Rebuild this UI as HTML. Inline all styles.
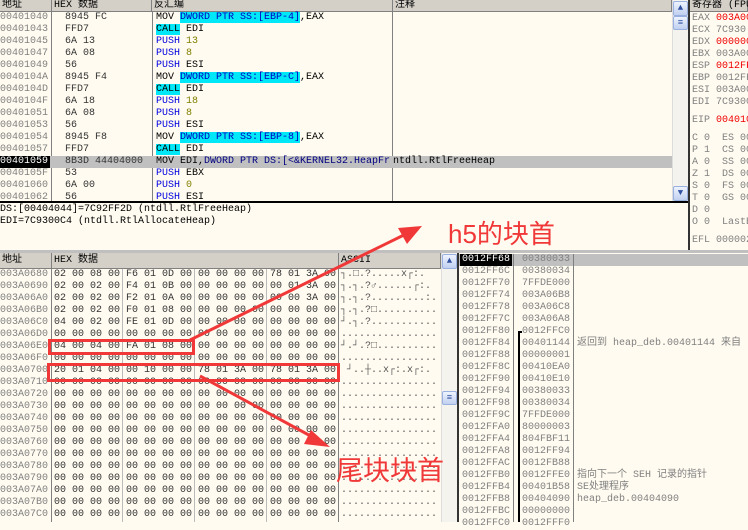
<!DOCTYPE html><html><head><meta charset="utf-8"><style>
*{margin:0;padding:0;box-sizing:border-box}
body{width:748px;height:522px;overflow:hidden;background:#FFFBF0;position:relative;font-family:"Liberation Mono","Noto Sans CJK SC",monospace;font-size:10px;color:#333}
.a{position:absolute}
.p{position:absolute;white-space:pre;line-height:12px}
.hd{position:absolute;background:#D4D0C8;height:12px;border-bottom:1px solid #808080;border-right:1px solid #808080;line-height:12px;white-space:pre;color:#000;padding-left:2px;font-family:"Liberation Mono","Noto Sans CJK SC",monospace}
.g{color:#808080}.b{color:#0000E0}.o{color:#808000}.c{background:#00E8F8;color:#0000C0}.cc{background:#00E8F8;color:#0000E0}.r{color:#F00000}.n{color:#000080}
.vl{position:absolute;width:1px;background:#808080}
.sb{position:absolute;background:#F4F3EE;border-left:1px solid #ddd}
.btn{position:absolute;width:15px;height:15px;background:linear-gradient(#EEF3FF,#C0D0F0);border:1px solid #9AB0E0;border-radius:2px;color:#3050A0;font-size:9px;text-align:center;line-height:13px}
.box{position:absolute;border:3px solid #F03838}
.ann{position:absolute;color:#F03838;font-family:"Liberation Sans","Noto Sans CJK SC",sans-serif;white-space:nowrap}
</style></head><body>
<div class="hd" style="left:0;top:0;width:52px">地址</div>
<div class="hd" style="left:52px;top:0;width:100px">HEX 数据</div>
<div class="hd" style="left:152px;top:0;width:241px">反汇编</div>
<div class="hd" style="left:393px;top:0;width:279px">注释</div>
<div class="vl" style="left:51px;top:12px;height:190px"></div>
<div class="vl" style="left:152px;top:12px;height:190px"></div>
<div class="vl" style="left:392px;top:12px;height:190px"></div>
<div class="a" style="left:0;top:156px;width:672px;height:12px;background:#C0C0C0"></div>
<div class="a" style="left:0;top:156px;width:50px;height:12px;background:#000"></div>
<div class="p g" style="left:0;top:12px">00401040
00401043
00401045
00401047
00401049
0040104A
0040104D
0040104F
00401051
00401053
00401054
00401057
<span style="color:#fff">00401059</span>
0040105F
00401060
00401062</div>
<div class="p" style="left:65px;top:12px">8945 FC
FFD7
6A 13
6A 08
56
8945 F4
FFD7
6A 18
6A 08
56
8945 F8
FFD7
8B3D 44404000
53
6A 00
56</div>
<div class="p" style="left:156px;top:12px;color:#000">MOV <span class="c">DWORD PTR SS:[EBP-4]</span>,EAX
<span class="cc" style="color:#000">CALL</span> EDI
<span class="b">PUSH</span> <span class="o">13</span>
<span class="b">PUSH</span> <span class="o">8</span>
<span class="b">PUSH</span> ESI
MOV <span class="c">DWORD PTR SS:[EBP-C]</span>,EAX
<span class="cc" style="color:#000">CALL</span> EDI
<span class="b">PUSH</span> <span class="o">18</span>
<span class="b">PUSH</span> <span class="o">8</span>
<span class="b">PUSH</span> ESI
MOV <span class="c">DWORD PTR SS:[EBP-8]</span>,EAX
<span class="cc" style="color:#000">CALL</span> EDI
MOV EDI,<span class="n">DWORD PTR DS:[&lt;&amp;KERNEL32.HeapFr</span>
<span class="b">PUSH</span> EBX
<span class="b">PUSH</span> <span class="o">0</span>
<span class="b">PUSH</span> ESI</div>
<div class="p" style="left:393px;top:156px;color:#000">ntdll.RtlFreeHeap</div>
<div class="sb" style="left:672px;top:0;width:16px;height:202px"></div>
<div class="btn" style="left:673px;top:1px">▲</div>
<div class="btn" style="left:673px;top:16px;height:14px">≡</div>
<div class="btn" style="left:673px;top:186px">▼</div>
<div class="a" style="left:0;top:201px;width:690px;height:2px;background:#000"></div>
<div class="p" style="left:0;top:204px;color:#000">DS:[00404044]=7C92FF2D (ntdll.RtlFreeHeap)
EDI=7C9300C4 (ntdll.RtlAllocateHeap)</div>
<div class="a" style="left:688px;top:0;width:2px;height:252px;background:#333"></div>
<div class="hd" style="left:690px;top:0;width:58px">寄存器 (FPU)</div>
<div class="p g" style="left:692px;top:13px">EAX <span class="r">003A0000</span>
ECX 7C930
EDX <span class="r">00000000</span>
EBX 003A00
ESP <span class="r">0012FF</span>
EBP 0012FF
ESI 003A00
EDI 7C9300</div>
<div class="p g" style="left:692px;top:115px">EIP <span class="r">00401059</span></div>
<div class="p g" style="left:692px;top:133px">C 0  ES 00
P 1  CS 00
A 0  SS 00
Z 1  DS 00
S 0  FS 00
T 0  GS 00
D 0
O 0  LastErr</div>
<div class="p g" style="left:692px;top:235px">EFL 00000246</div>
<div class="a" style="left:0;top:250px;width:748px;height:3px;background:#C0C0C0"></div>
<div class="hd" style="left:0;top:253px;width:52px;height:16px;line-height:15px">地址</div>
<div class="hd" style="left:52px;top:253px;width:287px;height:16px;line-height:15px">HEX 数据</div>
<div class="hd" style="left:339px;top:253px;width:102px;height:16px;line-height:15px">ASCII</div>
<div class="vl" style="left:51px;top:269px;height:253px"></div>
<div class="vl" style="left:122px;top:269px;height:253px;background:#bbb"></div>
<div class="vl" style="left:194px;top:269px;height:253px;background:#bbb"></div>
<div class="vl" style="left:266px;top:269px;height:253px;background:#bbb"></div>
<div class="vl" style="left:338px;top:269px;height:253px"></div>
<div class="p g" style="left:0;top:269px">003A0680
003A0690
003A06A0
003A06B0
003A06C0
003A06D0
003A06E0
003A06F0
003A0700
003A0710
003A0720
003A0730
003A0740
003A0750
003A0760
003A0770
003A0780
003A0790
003A07A0
003A07B0
003A07C0</div>
<div class="p" style="left:54px;top:269px">02 00 08 00 F6 01 0D 00 00 00 00 00 78 01 3A 00
02 00 02 00 F4 01 0B 00 00 00 00 00 00 01 3A 00
02 00 02 00 F2 01 0A 00 00 00 00 00 00 00 3A 00
02 00 02 00 F0 01 08 00 00 00 00 00 00 00 00 00
04 00 02 00 FE 01 0D 00 00 00 00 00 00 00 00 00
00 00 00 00 00 00 00 00 00 00 00 00 00 00 00 00
04 00 04 00 FA 01 08 00 00 00 00 00 00 00 00 00
00 00 00 00 00 00 00 00 00 00 00 00 00 00 00 00
20 01 04 00 00 10 00 00 78 01 3A 00 78 01 3A 00
00 00 00 00 00 00 00 00 00 00 00 00 00 00 00 00
00 00 00 00 00 00 00 00 00 00 00 00 00 00 00 00
00 00 00 00 00 00 00 00 00 00 00 00 00 00 00 00
00 00 00 00 00 00 00 00 00 00 00 00 00 00 00 00
00 00 00 00 00 00 00 00 00 00 00 00 00 00 00 00
00 00 00 00 00 00 00 00 00 00 00 00 00 00 00 00
00 00 00 00 00 00 00 00 00 00 00 00 00 00 00 00
00 00 00 00 00 00 00 00 00 00 00 00 00 00 00 00
00 00 00 00 00 00 00 00 00 00 00 00 00 00 00 00
00 00 00 00 00 00 00 00 00 00 00 00 00 00 00 00
00 00 00 00 00 00 00 00 00 00 00 00 00 00 00 00
00 00 00 00 00 00 00 00 00 00 00 00 00 00 00 00</div>
<div class="p" style="left:341px;top:269px;color:#555">┐.□.?.....x┌:.
┐.┐.?♂......┌:.
┐.┐.?.........:.
┐.┐.?□..........
┘.┐.?...........
................
┘.┘.?□..........
................
 ┘..┼..x┌:.x┌:.
................
................
................
................
................
................
................
................
................
................
................
................</div>
<div class="sb" style="left:441px;top:253px;width:16px;height:269px"></div>
<div class="btn" style="left:442px;top:254px">▲</div>
<div class="btn" style="left:442px;top:391px;height:14px">≡</div>
<div class="a" style="left:457px;top:253px;width:2px;height:269px;background:#333"></div>
<div class="a" style="left:459px;top:254px;width:289px;height:12px;background:#C0C0C0"></div>
<div class="a" style="left:460px;top:254px;width:52px;height:12px;background:#000"></div>
<div class="vl" style="left:513px;top:254px;height:268px"></div>
<div class="vl" style="left:573px;top:254px;height:268px"></div>
<div class="a" style="left:518px;top:331px;width:2px;height:191px;background:#000"></div>
<div class="a" style="left:518px;top:331px;width:4px;height:2px;background:#000"></div>
<div class="p g" style="left:462px;top:254px"><span style="color:#fff">0012FF68</span>
0012FF6C
0012FF70
0012FF74
0012FF78
0012FF7C
0012FF80
0012FF84
0012FF88
0012FF8C
0012FF90
0012FF94
0012FF98
0012FF9C
0012FFA0
0012FFA4
0012FFA8
0012FFAC
0012FFB0
0012FFB4
0012FFB8
0012FFBC
0012FFC0</div>
<div class="p g" style="left:522px;top:254px">00380033
00380034
7FFDE000
003A06B8
003A06C8
003A06A8
0012FFC0
00401144
00000001
00410EA0
00410E10
00380033
00380034
7FFDE000
80000003
804FBF11
0012FF94
0012FB88
0012FFE0
00401B58
00404090
00000000
0012FFF0</div>
<div class="p g" style="left:577px;top:338px">返回到 heap_deb.00401144 来自</div>
<div class="p g" style="left:577px;top:470px">指向下一个 SEH 记录的指针
SE处理程序
heap_deb.00404090</div>
<div class="box" style="left:48px;top:339px;width:147px;height:16px"></div>
<div class="box" style="left:47px;top:363px;width:293px;height:19px"></div>
<svg class="a" style="left:0;top:0" width="748" height="522">
<line x1="190" y1="340" x2="410" y2="232" stroke="#F03838" stroke-width="3"/>
<polygon points="422,226 398,228 407,244" fill="#F03838"/>
<line x1="200" y1="376" x2="318" y2="440" stroke="#F03838" stroke-width="3"/>
<polygon points="330,447 311,430 304,444" fill="#F03838"/>
</svg>
<div class="ann" style="left:448px;top:218px;font-size:26px;line-height:32px">h5的块首</div>
<div class="ann" style="left:336px;top:455px;font-size:27px;line-height:32px">尾块块首</div>
</body></html>
